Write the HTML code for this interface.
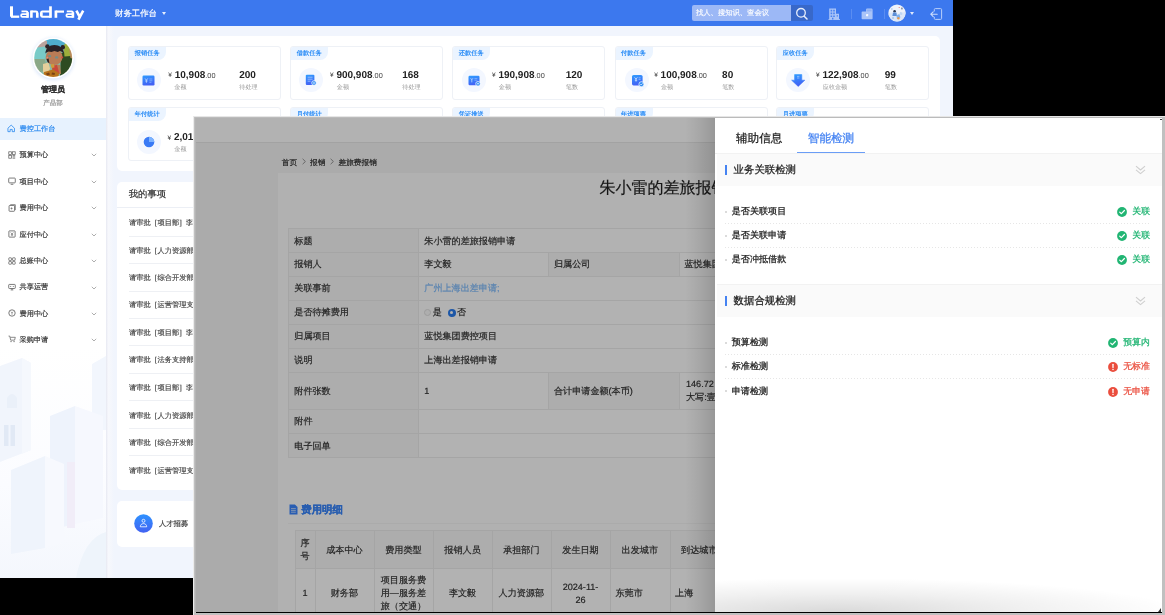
<!DOCTYPE html>
<html lang="zh">
<head>
<meta charset="utf-8">
<title>Landray</title>
<style>
*{box-sizing:border-box;margin:0;padding:0}
html,body{width:1165px;height:615px;overflow:hidden;background:#000}
body{position:relative;font-family:"Liberation Sans",sans-serif;color:#333;-webkit-font-smoothing:antialiased;text-rendering:geometricPrecision}
.abs{position:absolute}
.t{position:absolute;white-space:nowrap;line-height:1;-webkit-text-stroke:0.2px currentColor}

/* ---------- back window ---------- */
#back{will-change:transform;position:absolute;left:0;top:0;width:953px;height:578px;background:#f1f5fd;overflow:hidden}
#hdr{position:absolute;left:0;top:0;width:953px;height:26px;background:#3c78ee}
#side{position:absolute;left:0;top:26px;width:106px;height:552px;background:#fff;overflow:hidden}
.mi{position:absolute;left:0;width:106px;height:24px}
.mi .t{left:20px;top:7px;font-size:9px;color:#444}
.mi svg.ic{position:absolute;left:8px;top:7px;width:9px;height:9px}
.mi svg.cv{position:absolute;left:91px;top:10px;width:6px;height:4px}
.panel{position:absolute;background:#fff;border-radius:5px}
.card{position:absolute;width:153.2px;height:54.4px;background:#fff;border:1px solid #eef1f6;border-radius:3px;overflow:hidden}
.card .tag{position:absolute;left:-1px;top:-1px;height:14.5px;width:38px;text-align:center;background:#ebf4ff;color:#2a8cf6;font-size:6.25px;font-weight:bold;line-height:15.4px;border-radius:4px 0 8px 0;white-space:nowrap}
.card .ico{position:absolute;left:7.5px;top:21.8px;width:24px;height:24px;border-radius:12px;background:#f3f7ff}
.card .amt{position:absolute;left:40px;top:23.2px;font-size:10px;font-weight:bold;color:#222;white-space:nowrap;line-height:12px}
.card .amt i{font-style:normal;font-weight:normal;font-size:6.5px;color:#333;position:relative;top:-0.5px}
.card .amt em{font-style:normal;font-weight:normal;font-size:7.3px;color:#444}
.card .lb{position:absolute;top:37.3px;font-size:6.1px;margin-left:-0.5px;color:#999;white-space:nowrap;line-height:8px}
.card .cnt{position:absolute;top:23.2px;font-size:10px;margin-left:-0.6px;font-weight:bold;color:#222;line-height:12px}
.li{-webkit-text-stroke:0.15px currentColor;position:absolute;left:129px;font-size:7.25px;color:#444;white-space:nowrap;line-height:9px}
.sep{position:absolute;left:129px;width:700px;height:1px;background:#eef0f4}

/* ---------- front window ---------- */
#frame{position:absolute;left:193px;top:116px;width:972px;height:499px;background:#c0c0c0;border-left:1.5px solid #ececec;border-top:1px solid #e6e6e6}
#ftop{position:absolute;left:194.5px;top:117px;width:967.5px;height:1px;background:#bbbbbb}
#fedge{position:absolute;left:194.5px;top:117.5px;width:2px;height:494.5px;background:#b4b4b4}
#front{will-change:transform;position:absolute;left:196px;top:118px;width:966px;height:494px;background:#aaaaaa;overflow:hidden}
#fline{position:absolute;left:196px;top:612px;width:966px;height:1px;background:#000}
#rp{position:absolute;left:519px;top:0;width:447px;height:494px;background:#fff}

#front .pg{position:absolute;left:0;top:0;width:966px;height:494px;background:#f5f5f5}
#front .dim{position:absolute;left:0;top:0;width:966px;height:494px;background:rgba(0,0,0,0.3)}
.ft{position:absolute;white-space:nowrap;line-height:1;font-size:9px;color:#333;-webkit-text-stroke:0.2px currentColor}
.cell{position:absolute;border-left:1px solid #ececec;border-top:1px solid #ececec}
.lab{background:#f8f8f8}
.val{background:#fff}
.th{-webkit-text-stroke:0.2px currentColor;position:absolute;text-align:center;font-size:9.1px;line-height:13px;color:#333;white-space:nowrap}
.rt{position:absolute;white-space:nowrap;line-height:1;-webkit-text-stroke:0.25px currentColor}
.dot{position:absolute;height:1px;background:repeating-linear-gradient(90deg,#e6e6e6 0,#e6e6e6 1.5px,transparent 1.5px,transparent 3px)}
</style>
</head>
<body>

<div id="back">
<svg width="0" height="0" style="position:absolute"><defs><linearGradient id="gi" x1="0" y1="0" x2="0.25" y2="1"><stop offset="0" stop-color="#2f9dff"/><stop offset="1" stop-color="#4262f5"/></linearGradient></defs></svg>
  <div id="hdr">
    <svg class="abs" style="left:0;top:0" width="95" height="26" viewBox="0 0 95 26"><g fill="none" stroke="#fff" stroke-linejoin="round">
<path d="M11.500 6.300V16.700" stroke-width="3"/><path d="M11 16.700H19.200" stroke-width="2.300"/>
<path d="M21.5 11.400H26.4Q27.6 11.400 27.6 12.700M27.6 16.900H22.4Q21.1 16.900 21.1 15.550Q21.1 14.200 22.4 14.200H27.6" stroke-width="1.800"/><path d="M27.6 12.200V17.800" stroke-width="2.600"/>
<path d="M31.400 10.500V17.800M37.300 12.800V17.800" stroke-width="2.600"/><path d="M31.400 11.500H36Q37.300 11.500 37.300 12.900" stroke-width="2"/>
<path d="M50.500 6.300V17.800" stroke-width="2.700"/><path d="M50.500 16.800H42.400Q41.200 16.800 41.200 15.600V12.700Q41.200 11.500 42.400 11.500H50.500" stroke-width="2.100"/><path d="M41.300 12.500V15.800" stroke-width="2.600"/>
<path d="M55.900 10.500V17.800" stroke-width="2.700"/><path d="M55.900 11.600H64" stroke-width="2.200"/>
<path d="M66.8 11.400H71.7Q72.9 11.400 72.9 12.700M72.9 16.900H67.7Q66.4 16.900 66.4 15.550Q66.4 14.200 67.7 14.200H72.9" stroke-width="1.800"/><path d="M72.9 12.200V17.800" stroke-width="2.600"/>
<path d="M76.400 10.600L79.900 17.200M83.200 10.600L78.400 19.600" stroke-width="2.600" stroke-linecap="butt"/>
</g></svg>
    <div class="t" style="left:115px;top:8.800px;font-size:8.400px;color:#fff">财务工作台</div>
    <div class="abs" style="left:161.5px;top:12px;width:0;height:0;border-left:2.5px solid transparent;border-right:2.5px solid transparent;border-top:3px solid #e6eefc"></div>
    <div class="abs" style="left:692px;top:5px;width:99px;height:16px;background:#9cb8f6;border-radius:2px 0 0 2px"></div>
    <div class="t" style="left:696px;top:9.300px;font-size:7.300px;color:rgba(255,255,255,0.88)">找人、搜知识、查会议</div>
    <div class="abs" style="left:791px;top:5px;width:22px;height:16px;background:#3868c9;border-radius:0 2px 2px 0"></div>
    <svg class="abs" style="left:795px;top:7px" width="14" height="13" viewBox="0 0 14 13"><circle cx="6" cy="5.8" r="4.3" fill="none" stroke="#e8effc" stroke-width="1.3"/><path d="M9.2 9.2 L12 12" stroke="#e8effc" stroke-width="1.5" stroke-linecap="round"/></svg>
    <!-- building icon -->
    <svg class="abs" style="left:828px;top:7px" width="13" height="14" viewBox="0 0 13 14"><path d="M1.200 1.400h6.800v5.400h3v5.600h-9.800z" fill="#abc5f8"/><path d="M0.500 12.500h11.500" stroke="#abc5f8" stroke-width="0.900"/><path d="M2.600 2.800h1.600v1.600h-1.600zM5.200 2.800h1.600v1.600h-1.600zM2.600 5.600h1.600v1.600h-1.600zM5.200 5.600h1.600v1.600h-1.600zM2.600 8.400h1.600v1.600h-1.600zM5.200 8.400h1.600v1.600h-1.600zM8.600 8.200h1.400v1.400h-1.400zM4 10.800h1.400v1.600h-1.400z" fill="#4a82ef"/></svg>
    <div class="abs" style="left:851px;top:9px;width:1px;height:10px;background:#5a8df1"></div>
    <!-- folder icon -->
    <svg class="abs" style="left:860px;top:7px" width="14" height="14" viewBox="0 0 14 14"><path d="M1.600 5.200q0-0.800 0.800-0.800h3.600v-1.600q0-1.200 1.200-1.200h4.200q1.200 0 1.200 1.200v8.600q0 0.800-0.800 0.800h-9.400q-0.800 0-0.800-0.800z" fill="#a9c4f8"/><path d="M6.600 2.400h5v2h-5z" fill="#5e90f1" opacity="0.350"/><rect x="6" y="7" width="2.200" height="2.200" rx="0.400" fill="#f4f8ff"/></svg>
    <div class="abs" style="left:884px;top:9px;width:1px;height:10px;background:#5a8df1"></div>
    <!-- small avatar -->
    <svg class="abs" style="left:888px;top:4px" width="18" height="18" viewBox="0 0 18 18">
      <defs><clipPath id="av2"><circle cx="9" cy="9" r="8.600"/></clipPath></defs>
      <circle cx="9" cy="9" r="8.600" fill="#eef3fb"/>
      <g clip-path="url(#av2)"><path d="M0 10q4-3 8-1t10-2v11h-18z" fill="#dbe7f8"/><circle cx="6.600" cy="7.200" r="1.300" fill="#2c3a55"/><path d="M5 8.600h3.400l0.600 3.400h-4.600z" fill="#5b8fd8"/><path d="M8.400 11.500l3-1.500 1 3.500-3.500 1z" fill="#7fb2ee"/><circle cx="10.400" cy="14.200" r="1.200" fill="#e79a4e"/><rect x="13" y="3.600" width="1.800" height="1.800" fill="#8d97a8"/><rect x="10.600" y="3" width="1.400" height="1" fill="#e8a0a0"/><rect x="3" y="4.400" width="1.600" height="1.200" fill="#a9c6ee"/><path d="M12 8l2.500 0.500-0.500 2.500-2.500-0.500z" fill="#bcd6f5"/><circle cx="5" cy="14" r="1" fill="#a9c6ee"/></g>
    </svg>
    <div class="abs" style="left:910px;top:12px;width:0;height:0;border-left:2.5px solid transparent;border-right:2.5px solid transparent;border-top:3px solid #dfe9fc"></div>
    <!-- logout -->
    <svg class="abs" style="left:929px;top:7px" width="14" height="14" viewBox="0 0 14 14"><path d="M5.300 4.500V2.600q0-1 1-1h5.300q1 0 1 1v8.800q0 1-1 1H6.300q-1 0-1-1V9.800" fill="none" stroke="#b9cffa" stroke-width="1"/><path d="M8.200 7.200H1.800M4.200 4.800L1.800 7.200L4.200 9.600" fill="none" stroke="#cbdcfc" stroke-width="1.1" stroke-linecap="round" stroke-linejoin="round"/></svg>
  </div>
  <div id="side">
<svg class="abs" style="left:0;top:320px" width="106" height="232" viewBox="0 0 106 232">
  <defs>
    <linearGradient id="bg1" x1="0" y1="0" x2="0" y2="1"><stop offset="0" stop-color="#ffffff"/><stop offset="0.6" stop-color="#fbfcff"/><stop offset="1" stop-color="#f4f7fd"/></linearGradient>
    <filter id="ilb" x="-5%" y="-5%" width="110%" height="110%"><feGaussianBlur stdDeviation="0.700"/></filter>
  </defs>
  <rect width="106" height="232" fill="url(#bg1)"/>
  <g filter="url(#ilb)">
  <path d="M0 20L22 12L31 17V104L0 116Z" fill="#f1f5fc"/>
  <path d="M22 12L31 17V104L22 108Z" fill="#f5f8fd"/>
  <path d="M7 52q5-8 10 0v10h-10Z" fill="#eaf0f9"/>
  <path d="M4 79h4.500v21H4zM10.500 79h4.500v21h-4.500z" fill="#e1e9f5"/>
  <path d="M92 18L106 10V84H92Z" fill="#f2f6fd"/>
  <path d="M50 70L75 60V178L50 184Z" fill="#eef3fc"/>
  <path d="M75 60L103 70V172L75 178Z" fill="#f6f8fe"/>
  <path d="M67 116h8v66h-8z" fill="#f1edf8"/>
  <path d="M11 124L45 110V202L11 208Z" fill="#eff4fc"/>
  <path d="M45 110L64 118V196L45 202Z" fill="#f7f9fe"/>
  <path d="M76 232Q84 192 106 186V232Z" fill="#eef4fb"/>
  </g>
</svg>
<svg class="abs" style="left:28px;top:7px" width="50" height="52" viewBox="0 0 50 52">
  <defs><clipPath id="av1"><circle cx="25.200" cy="25" r="19"/></clipPath>
  <filter id="avb" x="-10%" y="-10%" width="120%" height="120%"><feGaussianBlur stdDeviation="0.550"/></filter>
  <radialGradient id="glow" cx="0.500" cy="0.500" r="0.500"><stop offset="0.780" stop-color="#dbe7fb" stop-opacity="0.900"/><stop offset="1" stop-color="#ffffff" stop-opacity="0"/></radialGradient></defs>
  <circle cx="25.200" cy="26" r="25" fill="url(#glow)"/>
  <circle cx="25.200" cy="25" r="20.600" fill="#fff"/>
  <g clip-path="url(#av1)"><g filter="url(#avb)">
    <rect x="4" y="4" width="44" height="44" fill="#86b9a8"/>
    <path d="M17 4h20v9.500l-8 1-10-1.500Z" fill="#4fadcc"/>
    <path d="M6 8h13v7.500l-9 2.500-5-3Z" fill="#b9a39d"/>
    <path d="M5 15l12-1.500 2 6-2.500 6.500H5Z" fill="#78cbc8"/>
    <path d="M5 26h11.500l1.500 5-2 7-11 3Z" fill="#8aa888"/>
    <path d="M15 31l5.500-1.500 1.500 6-2 5-5-1Z" fill="#e6cf9b"/>
    <path d="M33 20l10-2 4 10-3 14-12 2Z" fill="#2f4b23"/>
    <path d="M35.500 12l5-3 5 8-3 6-6 0.500Z" fill="#9daf3b"/>
    <path d="M41 16l5 1v9l-3.500-1Z" fill="#b98c5c"/>
    <ellipse cx="26.200" cy="24" rx="8.300" ry="8" fill="#ba7c56"/>
    <path d="M17.400 20.500c0-5.500 4.300-8.600 9-8.600s9.600 2.800 9.600 8.800c-1.800-1.600-3-2.300-4.200-2.600l-2 1-3.400-1.200-3 1.200-2.600-0.600c-1.400 0.400-2.400 1-3.400 2Z" fill="#2a2226"/>
    <circle cx="19.400" cy="13.400" r="2.200" fill="#2a2226"/><circle cx="34.800" cy="14.200" r="2.200" fill="#2a2226"/>
    <path d="M18.500 26q0.500 3.500 3 4.500l-1-5Z" fill="#2a2226"/>
    <ellipse cx="21.700" cy="23.200" rx="1.500" ry="1.100" fill="#6f8f8c"/><ellipse cx="28.600" cy="24.400" rx="1.600" ry="1.200" fill="#6f8f8c"/>
    <circle cx="19.300" cy="24.600" r="0.900" fill="#e08a7a"/><circle cx="34.300" cy="24.400" r="0.900" fill="#d8403a"/>
    <path d="M28 31.500l4 0.500 1 9-5-1Z" fill="#b97b55"/>
    <path d="M24 32.500l5-0.500 2.500 9-7 1Z" fill="#c9473b"/>
    <path d="M22.500 31.500l3.500-0.500 0.500 3.500-3 0.500Z" fill="#cf9a3a"/>
    <path d="M16 39l9-2.500 6 3.500-1 6H15Z" fill="#b8731f"/>
    <path d="M18 40.500l3-1 1 2-3 1ZM24 39.500l3 0.500-0.500 2-3-0.500Z" fill="#7a4312"/>
  </g></g>
</svg>
<div class="t" style="left:41px;top:59.700px;font-size:8px;font-weight:bold;color:#333">管理员</div>
<div class="t" style="left:43.200px;top:74.800px;font-size:6.500px;color:#999">产品部</div>
<div class="abs" style="left:0;top:91.5px;width:106px;height:22.5px;background:#e7f2fe"></div>
<svg class="abs" style="left:7px;top:98.3px" width="8.4" height="8.4" viewBox="0 0 9 9"><path d="M1 4.5L4.5 1.2L8 4.5V8.2H5.6V5.8H3.4V8.2H1Z" fill="none" stroke="#2f8cf0" stroke-width="0.9" stroke-linejoin="round"/></svg>
<div class="t" style="left:19.5px;top:99px;font-size:7.2px;color:#2f8cf0">费控工作台</div>
<svg class="abs" style="left:8px;top:124.6px" width="8" height="8" viewBox="0 0 9 9"><rect x="0.9" y="0.9" width="3" height="3" fill="none" stroke="#5a5a5a" stroke-width="0.8"/><rect x="5.1" y="0.9" width="3" height="3" fill="none" stroke="#5a5a5a" stroke-width="0.8"/><rect x="0.9" y="5.1" width="3" height="3" fill="none" stroke="#5a5a5a" stroke-width="0.8"/><path d="M5.1 5.1h3M5.1 6.6h3M5.1 8.1h3" stroke="#5a5a5a" stroke-width="0.8"/></svg>
<div class="t" style="left:19.5px;top:125.0px;font-size:7.2px;color:#383838">预算中心</div>
<svg class="abs" style="left:91px;top:127.1px" width="6" height="4" viewBox="0 0 6 4"><path d="M0.8 0.8L3 3L5.2 0.8" fill="none" stroke="#999" stroke-width="0.8"/></svg>
<svg class="abs" style="left:8px;top:151.1px" width="8" height="8" viewBox="0 0 9 9"><rect x="0.8" y="1.2" width="7.4" height="5.4" rx="0.8" fill="none" stroke="#5a5a5a" stroke-width="0.9"/><path d="M3 8.2h3" stroke="#5a5a5a" stroke-width="0.9"/></svg>
<div class="t" style="left:19.5px;top:151.5px;font-size:7.2px;color:#383838">项目中心</div>
<svg class="abs" style="left:91px;top:153.6px" width="6" height="4" viewBox="0 0 6 4"><path d="M0.8 0.8L3 3L5.2 0.8" fill="none" stroke="#999" stroke-width="0.8"/></svg>
<svg class="abs" style="left:8px;top:177.6px" width="8" height="8" viewBox="0 0 9 9"><rect x="1.2" y="1.6" width="6.2" height="6.6" rx="0.8" fill="none" stroke="#5a5a5a" stroke-width="0.9"/><path d="M2.6 0.8h5.6v6" fill="none" stroke="#5a5a5a" stroke-width="0.8"/><path d="M2.8 5h2.4M4 3.8v2.4" stroke="#5a5a5a" stroke-width="0.7"/></svg>
<div class="t" style="left:19.5px;top:178.0px;font-size:7.2px;color:#383838">费用中心</div>
<svg class="abs" style="left:91px;top:180.1px" width="6" height="4" viewBox="0 0 6 4"><path d="M0.8 0.8L3 3L5.2 0.8" fill="none" stroke="#999" stroke-width="0.8"/></svg>
<svg class="abs" style="left:8px;top:204.2px" width="8" height="8" viewBox="0 0 9 9"><rect x="1" y="1" width="7" height="7" rx="0.6" fill="none" stroke="#5a5a5a" stroke-width="0.9"/><path d="M3 2.8L4.5 4.6L6 2.8M4.5 4.6V6.8M3.2 5.4h2.6" fill="none" stroke="#5a5a5a" stroke-width="0.7"/></svg>
<div class="t" style="left:19.5px;top:204.6px;font-size:7.2px;color:#383838">应付中心</div>
<svg class="abs" style="left:91px;top:206.7px" width="6" height="4" viewBox="0 0 6 4"><path d="M0.8 0.8L3 3L5.2 0.8" fill="none" stroke="#999" stroke-width="0.8"/></svg>
<svg class="abs" style="left:8px;top:230.6px" width="8" height="8" viewBox="0 0 9 9"><rect x="0.9" y="0.9" width="3" height="3" rx="0.5" fill="none" stroke="#5a5a5a" stroke-width="0.8"/><rect x="5.1" y="0.9" width="3" height="3" rx="0.5" fill="none" stroke="#5a5a5a" stroke-width="0.8"/><rect x="0.9" y="5.1" width="3" height="3" rx="0.5" fill="none" stroke="#5a5a5a" stroke-width="0.8"/><rect x="5.1" y="5.1" width="3" height="3" rx="0.5" fill="none" stroke="#5a5a5a" stroke-width="0.8"/></svg>
<div class="t" style="left:19.5px;top:231.0px;font-size:7.2px;color:#383838">总账中心</div>
<svg class="abs" style="left:91px;top:233.1px" width="6" height="4" viewBox="0 0 6 4"><path d="M0.8 0.8L3 3L5.2 0.8" fill="none" stroke="#999" stroke-width="0.8"/></svg>
<svg class="abs" style="left:8px;top:257.0px" width="8" height="8" viewBox="0 0 9 9"><rect x="0.8" y="1.6" width="7.4" height="4.6" rx="0.8" fill="none" stroke="#5a5a5a" stroke-width="0.9"/><path d="M2.4 3.9h1.2M5.4 3.9h1.2M3 7.8h3M4.5 6.2v1.6" stroke="#5a5a5a" stroke-width="0.8"/></svg>
<div class="t" style="left:19.5px;top:257.4px;font-size:7.2px;color:#383838">共享运营</div>
<svg class="abs" style="left:91px;top:259.5px" width="6" height="4" viewBox="0 0 6 4"><path d="M0.8 0.8L3 3L5.2 0.8" fill="none" stroke="#999" stroke-width="0.8"/></svg>
<svg class="abs" style="left:8px;top:283.2px" width="8" height="8" viewBox="0 0 9 9"><circle cx="4.5" cy="4.5" r="3.6" fill="none" stroke="#5a5a5a" stroke-width="0.9"/><path d="M3.3 3L4.5 4.4L5.7 3M4.5 4.4V6.4" fill="none" stroke="#5a5a5a" stroke-width="0.7"/></svg>
<div class="t" style="left:19.5px;top:283.6px;font-size:7.2px;color:#383838">费用中心</div>
<svg class="abs" style="left:91px;top:285.7px" width="6" height="4" viewBox="0 0 6 4"><path d="M0.8 0.8L3 3L5.2 0.8" fill="none" stroke="#999" stroke-width="0.8"/></svg>
<svg class="abs" style="left:8px;top:309.4px" width="8" height="8" viewBox="0 0 9 9"><path d="M0.6 1.2h1.4l1 4.6h4.4l0.8-3.2H2.6" fill="none" stroke="#5a5a5a" stroke-width="0.8" stroke-linejoin="round"/><circle cx="3.4" cy="7.4" r="0.7" fill="#5a5a5a"/><circle cx="6.8" cy="7.4" r="0.7" fill="#5a5a5a"/></svg>
<div class="t" style="left:19.5px;top:309.8px;font-size:7.2px;color:#383838">采购申请</div>
<svg class="abs" style="left:91px;top:311.9px" width="6" height="4" viewBox="0 0 6 4"><path d="M0.8 0.8L3 3L5.2 0.8" fill="none" stroke="#999" stroke-width="0.8"/></svg>
</div>
<div class="abs" style="left:106px;top:26px;width:8px;height:552px;background:linear-gradient(90deg,#e6e8f1 0,#f0f1f8 14%,#f7f8fc 30%,#f1f5fd 100%)"></div>
<div class="panel" style="left:117px;top:36px;width:823px;height:134.5px"></div>
<div class="card" style="left:128.3px;top:45.7px"><div class="tag">报销任务</div><div class="ico"><svg class="abs" style="left:5.5px;top:7px" width="13" height="11" viewBox="0 0 13 11"><defs><linearGradient id="gb" x1="0" y1="0" x2="0.3" y2="1"><stop offset="0" stop-color="#2f9bff"/><stop offset="1" stop-color="#4160f4"/></linearGradient></defs><rect x="0.5" y="0.5" width="12" height="10" rx="1.2" fill="url(#gb)"/><path d="M3 3.4L4.4 5.2L5.8 3.4M4.4 5.2V7.8M3.2 6h2.4" fill="none" stroke="#cfe2ff" stroke-width="0.7"/><path d="M7.4 4h3M7.4 5.8h3M7.4 7.4h2" stroke="#9fc4ff" stroke-width="0.6"/></svg></div><div class="amt" style="left:39.0px"><i>¥</i> 10,908<em>.00</em></div><div class="lb" style="left:45.5px">金额</div><div class="cnt" style="left:110.5px">200</div><div class="lb" style="left:110.5px">待处理</div></div>
<div class="card" style="left:290.3px;top:45.7px"><div class="tag">借款任务</div><div class="ico"><svg class="abs" style="left:6.5px;top:6px" width="12" height="12" viewBox="0 0 12 12"><rect x="0.8" y="0.8" width="8.6" height="10.2" rx="1" fill="url(#gi)"/><path d="M2.6 3.2h5M2.6 5.2h5M2.6 7.2h3" stroke="#bcd4ff" stroke-width="0.7"/><circle cx="9" cy="9" r="2.3" fill="#2f8cf5" stroke="#fff" stroke-width="0.7"/><circle cx="9" cy="9" r="0.800" fill="#fff"/></svg></div><div class="amt" style="left:38.700px"><i>¥</i> 900,908<em>.00</em></div><div class="lb" style="left:46.0px">金额</div><div class="cnt" style="left:111.5px">168</div><div class="lb" style="left:111.5px">待处理</div></div>
<div class="card" style="left:452.3px;top:45.7px"><div class="tag">还款任务</div><div class="ico" style="margin-left:1.3px"><svg class="abs" style="left:5.5px;top:6.5px" width="13" height="12" viewBox="0 0 13 12"><rect x="0.5" y="0.8" width="11" height="9.4" rx="1.2" fill="url(#gi)"/><path d="M2.6 3.2L3.8 4.8L5 3.2M3.8 4.8V7.4" fill="none" stroke="#cfe2ff" stroke-width="0.7"/><path d="M6.4 3.6h3M6.4 5.2h3" stroke="#9fc4ff" stroke-width="0.6"/><circle cx="10" cy="8.800" r="2.300" fill="#2f8cf5" stroke="#fff" stroke-width="0.700"/><circle cx="10" cy="8.800" r="0.800" fill="#fff"/></svg></div><div class="amt" style="left:38.700px"><i>¥</i> 190,908<em>.00</em></div><div class="lb" style="left:46.0px">金额</div><div class="cnt" style="left:113.0px">120</div><div class="lb" style="left:113.0px">笔数</div></div>
<div class="card" style="left:614.5px;top:45.7px"><div class="tag">付款任务</div><div class="ico" style="margin-left:2.2px"><svg class="abs" style="left:5.5px;top:5.500px" width="14" height="14" viewBox="0 0 14 14"><rect x="1" y="1" width="10.600" height="10.400" rx="1.600" fill="url(#gi)"/><path d="M3.600 3.400L5 5.200L6.400 3.400M5 5.200V7.600M3.800 6.200h2.400" fill="none" stroke="#d6e6ff" stroke-width="0.800"/><path d="M7.600 3.800h2M7.600 5.400h2" stroke="#a9cbff" stroke-width="0.700"/><circle cx="10.400" cy="10.200" r="2.500" fill="#2f8cf5" stroke="#fff" stroke-width="0.700"/><path d="M9.300 10.200l0.800 0.800l1.500-1.600" fill="none" stroke="#fff" stroke-width="0.700"/></svg></div><div class="amt" style="left:38.700px"><i>¥</i> 100,908<em>.00</em></div><div class="lb" style="left:46.0px">金额</div><div class="cnt" style="left:107.2px">80</div><div class="lb" style="left:107.2px">笔数</div></div>
<div class="card" style="left:776.3px;top:45.7px"><div class="tag">应收任务</div><div class="ico" style="margin-left:1.3px"><svg class="abs" style="left:4.800px;top:5.800px" width="14.400" height="13" viewBox="0 0 14.400 13"><path d="M3.600 0.600h7.200v5.600h3L7.200 12.400L0.600 6.200h3Z" fill="url(#gi)" stroke="url(#gi)" stroke-width="0.600" stroke-linejoin="round"/><path d="M6 2.400h2.400M6 4h2.400" stroke="#a9cbff" stroke-width="0.700"/></svg></div><div class="amt" style="left:38.700px"><i>¥</i> 122,908<em>.00</em></div><div class="lb" style="left:46.0px">应收金额</div><div class="cnt" style="left:108.0px">99</div><div class="lb" style="left:108.0px">笔数</div></div>
<div class="card" style="left:128.3px;top:106.7px"><div class="tag">年付统计</div><div class="ico" style="margin-top:0.5px"><svg class="abs" style="left:6px;top:6px" width="12" height="12" viewBox="0 0 12 12"><circle cx="6" cy="6" r="5.300" fill="#3a7af5"/><path d="M6 6V0.700A5.300 5.300 0 0 1 11.300 6Z" fill="#7cb3ff"/></svg></div><div class="amt" style="left:38.2px;margin-top:1.6px"><i>¥</i> 2,010</div><div class="lb" style="left:45.5px;margin-top:1.1px">金额</div></div>
<div class="card" style="left:290.3px;top:106.7px"><div class="tag">月付统计</div></div>
<div class="card" style="left:452.3px;top:106.7px"><div class="tag">凭证推送</div></div>
<div class="card" style="left:614.5px;top:106.7px"><div class="tag">年进项票</div></div>
<div class="card" style="left:776.3px;top:106.7px"><div class="tag">月进项票</div></div>
<div class="panel" style="left:117px;top:181.5px;width:823px;height:308.5px"></div>
<div class="t" style="left:128.8px;top:190.1px;font-size:9.3px;color:#333">我的事项</div>
<div class="abs" style="left:117px;top:207px;width:823px;height:1px;background:#eceff5"></div>
<div class="li" style="top:218.4px">请审批&nbsp; [&hairsp;项目部&hairsp;]&nbsp; 李彬</div>
<div class="sep" style="top:235.6px"></div>
<div class="li" style="top:246.1px">请审批&nbsp; [&hairsp;人力资源部]</div>
<div class="sep" style="top:263.3px"></div>
<div class="li" style="top:273.4px">请审批&nbsp; [&hairsp;综合开发部]</div>
<div class="sep" style="top:290.6px"></div>
<div class="li" style="top:300.4px">请审批&nbsp; [&hairsp;运营管理支持</div>
<div class="sep" style="top:317.6px"></div>
<div class="li" style="top:328.0px">请审批&nbsp; [&hairsp;项目部&hairsp;]&nbsp; 李彬</div>
<div class="sep" style="top:345.2px"></div>
<div class="li" style="top:355.4px">请审批&nbsp; [&hairsp;法务支持部]</div>
<div class="sep" style="top:372.6px"></div>
<div class="li" style="top:383.1px">请审批&nbsp; [&hairsp;项目部&hairsp;]&nbsp; 李彬</div>
<div class="sep" style="top:400.3px"></div>
<div class="li" style="top:410.7px">请审批&nbsp; [&hairsp;人力资源部]</div>
<div class="sep" style="top:427.9px"></div>
<div class="li" style="top:438.2px">请审批&nbsp; [&hairsp;综合开发部]</div>
<div class="sep" style="top:455.4px"></div>
<div class="li" style="top:465.8px">请审批&nbsp; [&hairsp;运营管理支持</div>
<div class="panel" style="left:117px;top:500.5px;width:823px;height:46.5px"></div>
<svg class="abs" style="left:133.5px;top:514px" width="19" height="19" viewBox="0 0 19 19"><defs><linearGradient id="gc" x1="0" y1="0" x2="0" y2="1"><stop offset="0" stop-color="#2e92ff"/><stop offset="1" stop-color="#4262f2"/></linearGradient></defs><circle cx="9.5" cy="9.500" r="9.300" fill="url(#gc)"/><circle cx="9.500" cy="6.800" r="1.500" fill="none" stroke="#fff" stroke-width="0.800"/><path d="M6.300 12.800c0-2 1.400-3.200 3.200-3.200s3.200 1.200 3.200 3.200Z" fill="none" stroke="#fff" stroke-width="0.800"/></svg>
<div class="t" style="left:159px;top:520px;font-size:7.300px;color:#444">人才招募</div>
</div>

<div id="frame"></div>
<div id="fedge"></div><div id="ftop"></div>
<div id="front">
<div class="pg">
<div class="abs" style="left:0;top:0;width:966px;height:25.2px;background:#fff;border-bottom:1px solid #e9e9e9"></div>
<div class="ft" style="left:85.7px;top:40.0px;font-size:7.7px;color:#333">首页<svg width="13" height="7" viewBox="0 0 13 7" style="vertical-align:-0.5px"><path d="M5.600 0.800L8.400 3.500L5.600 6.200" fill="none" stroke="#8a8a8a" stroke-width="0.900"/></svg>报销<svg width="13" height="7" viewBox="0 0 13 7" style="vertical-align:-0.5px"><path d="M5.600 0.800L8.400 3.500L5.600 6.200" fill="none" stroke="#8a8a8a" stroke-width="0.900"/></svg>差旅费报销</div>
<div class="abs" style="left:82px;top:55.2px;width:804px;height:440px;background:#fefefe"></div>
<div class="ft" style="left:403.5px;top:63.0px;font-size:16px;color:#222">朱小雷的差旅报销申请</div>
<div class="abs" style="left:92px;top:110px;width:785px;height:230px;border-right:1px solid #ececec;border-bottom:1px solid #ececec"></div>
<div class="cell lab" style="left:92px;top:110px;width:130px;height:24px"></div>
<div class="ft" style="left:98.3px;top:118.5px;font-size:9.1px;">标题</div>
<div class="cell val" style="left:222px;top:110px;width:654px;height:24px"></div>
<div class="cell lab" style="left:92px;top:134px;width:130px;height:24px"></div>
<div class="ft" style="left:98.3px;top:142.2px;font-size:9.1px;">报销人</div>
<div class="cell val" style="left:222px;top:134px;width:130px;height:24px"></div>
<div class="cell lab" style="left:352px;top:134px;width:131px;height:24px"></div>
<div class="cell val" style="left:483px;top:134px;width:393px;height:24px"></div>
<div class="cell lab" style="left:92px;top:158px;width:130px;height:24px"></div>
<div class="ft" style="left:98.3px;top:166.0px;font-size:9.1px;">关联事前</div>
<div class="cell val" style="left:222px;top:158px;width:654px;height:24px"></div>
<div class="cell lab" style="left:92px;top:182px;width:130px;height:24px"></div>
<div class="ft" style="left:98.3px;top:190.0px;font-size:9.1px;">是否待摊费用</div>
<div class="cell val" style="left:222px;top:182px;width:654px;height:24px"></div>
<div class="cell lab" style="left:92px;top:206px;width:130px;height:24px"></div>
<div class="ft" style="left:98.3px;top:214.0px;font-size:9.1px;">归属项目</div>
<div class="cell val" style="left:222px;top:206px;width:654px;height:24px"></div>
<div class="cell lab" style="left:92px;top:230px;width:130px;height:24px"></div>
<div class="ft" style="left:98.3px;top:238.1px;font-size:9.1px;">说明</div>
<div class="cell val" style="left:222px;top:230px;width:654px;height:24px"></div>
<div class="cell lab" style="left:92px;top:254px;width:130px;height:37px"></div>
<div class="ft" style="left:98.3px;top:268.7px;font-size:9.1px;">附件张数</div>
<div class="cell val" style="left:222px;top:254px;width:130px;height:37px"></div>
<div class="cell lab" style="left:352px;top:254px;width:131px;height:37px"></div>
<div class="cell val" style="left:483px;top:254px;width:393px;height:37px"></div>
<div class="cell lab" style="left:92px;top:291px;width:130px;height:24px"></div>
<div class="ft" style="left:98.3px;top:299.4px;font-size:9.1px;">附件</div>
<div class="cell val" style="left:222px;top:291px;width:654px;height:24px"></div>
<div class="cell lab" style="left:92px;top:315px;width:130px;height:24px"></div>
<div class="ft" style="left:98.3px;top:323.5px;font-size:9.1px;">电子回单</div>
<div class="cell val" style="left:222px;top:315px;width:654px;height:24px"></div>
<div class="ft" style="left:228.3px;top:118.5px;font-size:9.1px;">朱小雷的差旅报销申请</div>
<div class="ft" style="left:228.3px;top:142.2px;font-size:9.1px;">李文毅</div>
<div class="ft" style="left:358.0px;top:142.2px;font-size:9.1px;">归属公司</div>
<div class="ft" style="left:488.5px;top:142.2px;font-size:9.1px;">蓝悦集团</div>
<div class="ft" style="left:228.3px;top:166.0px;font-size:9.1px;color:#80bcfc">广州上海出差申请;</div>
<div class="abs" style="left:228.2px;top:191.0px;width:7px;height:7px;border-radius:50%;border:1px solid #e0e0e0;background:#fafafa"></div>
<div class="ft" style="left:236.8px;top:190.0px;font-size:9.1px;">是</div>
<div class="abs" style="left:251.7px;top:190.5px;width:8px;height:8px;border-radius:50%;background:#2a7df0"></div>
<div class="abs" style="left:254.2px;top:193.0px;width:3px;height:3px;border-radius:50%;background:#fff"></div>
<div class="ft" style="left:261.0px;top:190.0px;font-size:9.1px;">否</div>
<div class="ft" style="left:228.3px;top:214.0px;font-size:9.1px;">蓝悦集团费控项目</div>
<div class="ft" style="left:228.3px;top:238.1px;font-size:9.1px;">上海出差报销申请</div>
<div class="ft" style="left:228.3px;top:268.7px;font-size:9.1px;">1</div>
<div class="ft" style="left:358.0px;top:268.7px;font-size:9.1px;">合计申请金额(本币)</div>
<div class="ft" style="left:490.0px;top:262.1px;font-size:9.1px;">146.72</div>
<div class="ft" style="left:490.0px;top:275.4px;font-size:9.1px;">大写:壹佰肆拾陆元</div>
<svg class="abs" style="left:93.0px;top:386.2px" width="9" height="11" viewBox="0 0 9 11"><path d="M0.5 0.4h5.4l2.600 2.600v7.600H0.500Z" fill="#3b86ff"/><path d="M2 4.600h4.800M2 6.400h4.800M2 8.200h4.800" stroke="#d7e6ff" stroke-width="0.800"/></svg>
<div class="ft" style="left:105.3px;top:387.7px;font-size:10.4px;color:#3a86fb;font-weight:bold">费用明细</div>
<div class="abs" style="left:92.0px;top:405.0px;width:790px;height:1px;background:#f5f5f5"></div>
<div class="abs" style="left:99px;top:412px;width:496px;height:87px;border-right:1px solid #ececec;border-bottom:1px solid #ececec"></div>
<div class="cell lab" style="left:99px;top:412px;width:20px;height:38px"></div>
<div class="cell val" style="left:99px;top:450px;width:20px;height:48px"></div>
<div class="th" style="left:98.6px;top:419.0px;width:20.7px">序<br>号</div>
<div class="cell lab" style="left:119px;top:412px;width:59px;height:38px"></div>
<div class="cell val" style="left:119px;top:450px;width:59px;height:48px"></div>
<div class="th" style="left:119.3px;top:425.5px;width:58.2px">成本中心</div>
<div class="cell lab" style="left:178px;top:412px;width:59px;height:38px"></div>
<div class="cell val" style="left:178px;top:450px;width:59px;height:48px"></div>
<div class="th" style="left:177.5px;top:425.5px;width:59.9px">费用类型</div>
<div class="cell lab" style="left:237px;top:412px;width:59px;height:38px"></div>
<div class="cell val" style="left:237px;top:450px;width:59px;height:48px"></div>
<div class="th" style="left:237.4px;top:425.5px;width:58.3px">报销人员</div>
<div class="cell lab" style="left:296px;top:412px;width:59px;height:38px"></div>
<div class="cell val" style="left:296px;top:450px;width:59px;height:48px"></div>
<div class="th" style="left:295.7px;top:425.5px;width:59.3px">承担部门</div>
<div class="cell lab" style="left:355px;top:412px;width:59px;height:38px"></div>
<div class="cell val" style="left:355px;top:450px;width:59px;height:48px"></div>
<div class="th" style="left:355.0px;top:425.5px;width:59.0px">发生日期</div>
<div class="cell lab" style="left:414px;top:412px;width:60px;height:38px"></div>
<div class="cell val" style="left:414px;top:450px;width:60px;height:48px"></div>
<div class="th" style="left:414.0px;top:425.5px;width:59.6px">出发城市</div>
<div class="cell lab" style="left:474px;top:412px;width:59px;height:38px"></div>
<div class="cell val" style="left:474px;top:450px;width:59px;height:48px"></div>
<div class="th" style="left:473.6px;top:425.5px;width:59.4px">到达城市</div>
<div class="cell lab" style="left:533px;top:412px;width:61px;height:38px"></div>
<div class="cell val" style="left:533px;top:450px;width:61px;height:48px"></div>
<div class="th" style="left:533.0px;top:425.5px;width:61.0px">交通工具</div>
<div class="th" style="left:98.6px;top:469.0px;width:20.7px;">1</div>
<div class="th" style="left:119.3px;top:469.0px;width:58.2px;">财务部</div>
<div class="th" style="left:177.5px;top:456.0px;width:59.9px;">项目服务费<br>用—服务差<br>旅（交通）</div>
<div class="th" style="left:237.4px;top:469.0px;width:58.3px;">李文毅</div>
<div class="th" style="left:295.7px;top:469.0px;width:59.3px;">人力资源部</div>
<div class="th" style="left:355.0px;top:462.5px;width:59.0px;">2024-11-<br>26</div>
<div class="th" style="left:414.0px;top:469.0px;width:59.6px;text-align:left;padding-left:5.500px">东莞市</div>
<div class="th" style="left:473.6px;top:469.0px;width:59.4px;text-align:left;padding-left:5.500px">上海</div>
</div>
<div class="dim"></div>
<div class="abs" style="left:489px;top:0;width:30px;height:494px;background:linear-gradient(90deg,rgba(0,0,0,0),rgba(0,0,0,0.05) 40%,rgba(0,0,0,0.15))"></div>
  <div id="rp">
<div class="rt" style="left:21.0px;top:14.8px;font-size:11.6px;color:#222;">辅助信息</div>
<div class="rt" style="left:92.8px;top:14.8px;font-size:11.6px;color:#4583f2;">智能检测</div>
<div class="abs" style="left:0;top:34.6px;width:447px;height:1px;background:#ededed"></div>
<div class="abs" style="left:82.3px;top:33.9px;width:68.2px;height:1.6px;background:#6a9df6"></div>
<div class="abs" style="left:2px;top:35.4px;width:445px;height:32.6px;background:#fafafa;border-top:1px solid #f2f2f2"></div>
<div class="abs" style="left:10.0px;top:47.0px;width:2px;height:10px;background:#4583f2"></div>
<div class="rt" style="left:18.6px;top:48.1px;font-size:10.4px;color:#222;">业务关联检测</div>
<svg class="abs" style="left:419.5px;top:47.0px" width="11" height="10" viewBox="0 0 11 10"><path d="M1 1.200L5.500 5L10 1.200M1 4.800L5.500 8.600L10 4.800" fill="none" stroke="#cfcfcf" stroke-width="1.100" stroke-linejoin="round"/></svg>
<div class="abs" style="left:2px;top:166.0px;width:445px;height:33.4px;background:#fafafa;border-top:1px solid #f2f2f2"></div>
<div class="abs" style="left:10.0px;top:178.0px;width:2px;height:10px;background:#4583f2"></div>
<div class="rt" style="left:18.6px;top:179.1px;font-size:10.4px;color:#222;">数据合规检测</div>
<svg class="abs" style="left:419.5px;top:178.0px" width="11" height="10" viewBox="0 0 11 10"><path d="M1 1.200L5.500 5L10 1.200M1 4.800L5.500 8.600L10 4.800" fill="none" stroke="#cfcfcf" stroke-width="1.100" stroke-linejoin="round"/></svg>
<div class="abs" style="left:10.3px;top:92.7px;width:2px;height:2px;border-radius:1px;background:#cfcfcf"></div>
<div class="rt" style="left:16.7px;top:89.0px;font-size:9.1px;color:#222;">是否关联项目</div>
<svg class="abs" style="left:401.7px;top:88.8px" width="10" height="10" viewBox="0 0 10 10"><circle cx="5" cy="5" r="4.900" fill="#21b573"/><path d="M2.700 5.100L4.400 6.700L7.400 3.500" fill="none" stroke="#fff" stroke-width="1.200" stroke-linecap="round" stroke-linejoin="round"/></svg>
<div class="rt" style="left:417.3px;top:89.0px;font-size:8.9px;color:#21b573;">关联</div>
<div class="abs" style="left:10.3px;top:117.0px;width:2px;height:2px;border-radius:1px;background:#cfcfcf"></div>
<div class="rt" style="left:16.7px;top:113.3px;font-size:9.1px;color:#222;">是否关联申请</div>
<svg class="abs" style="left:401.7px;top:113.1px" width="10" height="10" viewBox="0 0 10 10"><circle cx="5" cy="5" r="4.900" fill="#21b573"/><path d="M2.700 5.100L4.400 6.700L7.400 3.500" fill="none" stroke="#fff" stroke-width="1.200" stroke-linecap="round" stroke-linejoin="round"/></svg>
<div class="rt" style="left:417.3px;top:113.4px;font-size:8.9px;color:#21b573;">关联</div>
<div class="abs" style="left:10.3px;top:140.9px;width:2px;height:2px;border-radius:1px;background:#cfcfcf"></div>
<div class="rt" style="left:16.7px;top:137.1px;font-size:9.1px;color:#222;">是否冲抵借款</div>
<svg class="abs" style="left:401.7px;top:137.0px" width="10" height="10" viewBox="0 0 10 10"><circle cx="5" cy="5" r="4.900" fill="#21b573"/><path d="M2.700 5.100L4.400 6.700L7.400 3.500" fill="none" stroke="#fff" stroke-width="1.200" stroke-linecap="round" stroke-linejoin="round"/></svg>
<div class="rt" style="left:417.3px;top:137.2px;font-size:8.9px;color:#21b573;">关联</div>
<div class="abs" style="left:10.3px;top:223.6px;width:2px;height:2px;border-radius:1px;background:#cfcfcf"></div>
<div class="rt" style="left:16.7px;top:219.8px;font-size:9.1px;color:#222;">预算检测</div>
<svg class="abs" style="left:392.6px;top:219.7px" width="10" height="10" viewBox="0 0 10 10"><circle cx="5" cy="5" r="4.900" fill="#21b573"/><path d="M2.700 5.100L4.400 6.700L7.400 3.500" fill="none" stroke="#fff" stroke-width="1.200" stroke-linecap="round" stroke-linejoin="round"/></svg>
<div class="rt" style="left:408.2px;top:219.9px;font-size:8.9px;color:#21b573;">预算内</div>
<div class="abs" style="left:10.3px;top:248.0px;width:2px;height:2px;border-radius:1px;background:#cfcfcf"></div>
<div class="rt" style="left:16.7px;top:244.2px;font-size:9.1px;color:#222;">标准检测</div>
<svg class="abs" style="left:392.6px;top:244.1px" width="10" height="10" viewBox="0 0 10 10"><circle cx="5" cy="5" r="4.900" fill="#ea4d3d"/><path d="M5 2.300V5.600" stroke="#fff" stroke-width="1.300" stroke-linecap="round"/><circle cx="5" cy="7.500" r="0.750" fill="#fff"/></svg>
<div class="rt" style="left:408.2px;top:244.4px;font-size:8.9px;color:#ea4d3d;">无标准</div>
<div class="abs" style="left:10.3px;top:272.4px;width:2px;height:2px;border-radius:1px;background:#cfcfcf"></div>
<div class="rt" style="left:16.7px;top:268.6px;font-size:9.1px;color:#222;">申请检测</div>
<svg class="abs" style="left:392.6px;top:268.5px" width="10" height="10" viewBox="0 0 10 10"><circle cx="5" cy="5" r="4.900" fill="#ea4d3d"/><path d="M5 2.300V5.600" stroke="#fff" stroke-width="1.300" stroke-linecap="round"/><circle cx="5" cy="7.500" r="0.750" fill="#fff"/></svg>
<div class="rt" style="left:408.2px;top:268.8px;font-size:8.9px;color:#ea4d3d;">无申请</div>
<div class="dot" style="left:10.0px;top:105.3px;width:425px"></div>
<div class="dot" style="left:10.0px;top:128.8px;width:425px"></div>
<div class="dot" style="left:10.0px;top:235.6px;width:425px"></div>
<div class="dot" style="left:10.0px;top:260.4px;width:425px"></div>
<div class="abs" style="left:0;top:454px;width:447px;height:40px;background:radial-gradient(ellipse 345px 34px at 27% 100%,rgba(0,0,0,0.15),rgba(0,0,0,0.06) 55%,rgba(0,0,0,0) 100%)"></div>
<div class="abs" style="left:443px;top:490px;width:0;height:0;border-left:3px solid transparent;border-bottom:4px solid #333"></div>
<div class="abs" style="left:445.300px;top:0.800px;width:1.700px;height:1.700px;border-radius:1px;background:#222"></div>
</div>
</div>
<div id="fline"></div>

</body>
</html>
